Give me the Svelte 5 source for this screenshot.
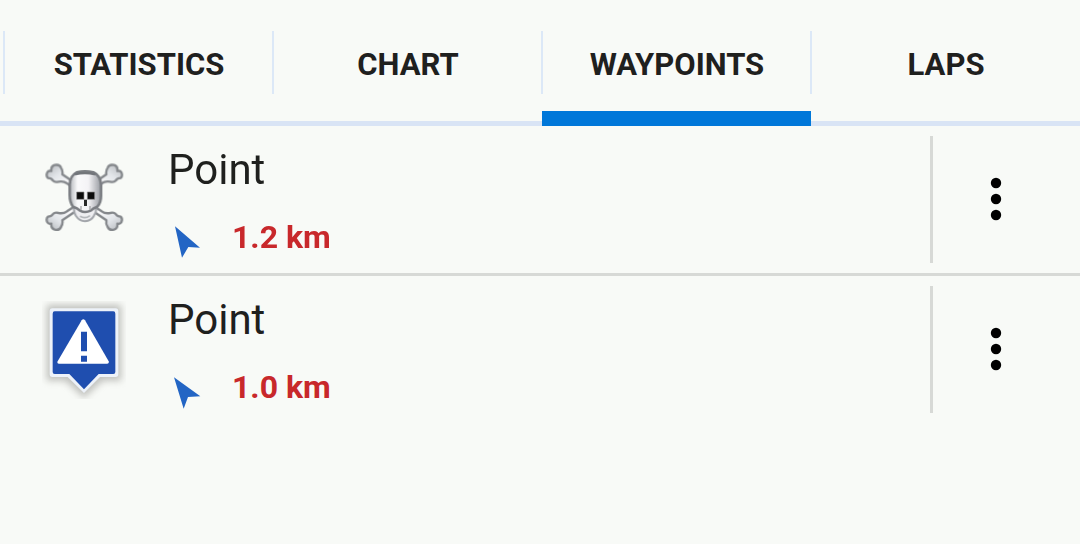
<script>
  const tabs = ['Statistics', 'Chart', 'Waypoints', 'Laps'];
  let active = $state('Waypoints');

  const waypoints = [
    { id: 1, icon: 'skull', name: 'Point', distance: '1.2 km', box: '18 33 126 126', arrow: '45,49 120,113 85,111 66,143' },
    { id: 2, icon: 'warning', name: 'Point', distance: '1.0 km', box: '18 18 126 126', arrow: '42,37 121,94 84,96 71,131' }
  ];
</script>

{#snippet bone()}
  <path d="M148 132 L99 100 Q88 92 74 95 Q62 98 57 92 Q52 84 42 84 Q35 77 40 67 Q43 61 52 63 Q50 48 62 45 Q77 42 81 53 Q87 62 85 73 L160 124 Z"
    fill="url(#bone)" stroke="#85888c" stroke-width="7" stroke-linejoin="round" />
{/snippet}

<main>
  <nav>
    {#each tabs as tab}
      <button class="tab" class:active={tab === active} onclick={() => (active = tab)}>
        <span>{tab}</span>
      </button>
    {/each}
  </nav>

  <ul>
    {#each waypoints as w (w.id)}
      <li>
        {#if w.icon === 'skull'}
          <svg class="marker" viewBox="24 3 252 294" aria-hidden="true">
            <defs>
              <linearGradient id="bone" x1="0" y1="0" x2="1" y2="1">
                <stop offset="0" stop-color="#b3b6ba" />
                <stop offset="0.3" stop-color="#e2e5e9" />
                <stop offset="0.6" stop-color="#fbfbfc" />
                <stop offset="1" stop-color="#d5d7da" />
              </linearGradient>
              <linearGradient id="skull" x1="0" y1="0" x2="1" y2="0">
                <stop offset="0" stop-color="#b4b7bc" />
                <stop offset="0.25" stop-color="#fafafb" />
                <stop offset="0.6" stop-color="#f4f3f6" />
                <stop offset="1" stop-color="#989ba1" />
              </linearGradient>
              <filter id="smooth">
                <feGaussianBlur stdDeviation="2" />
              </filter>
            </defs>
            <g filter="url(#smooth)">
              {@render bone()}
              <g transform="translate(302 0) scale(-1 1)">{@render bone()}</g>
              <g transform="translate(0 284) scale(1 -1)">{@render bone()}</g>
              <g transform="translate(302 284) scale(-1 -1)">{@render bone()}</g>
              <path d="M119 170 Q120 190 126 198 Q136 213 153 214 Q172 212 180 197 Q187 187 187 170 Z" fill="#eeeef1" stroke="#a3a6ab" stroke-width="6" />
              <path d="M128 67 Q153 61 178 67 Q200 77 201 105 V137 Q201 158 190 170 Q178 174 170 182 Q153 190 138 182 Q130 174 117 170 Q107 156 107 135 V104 Q108 77 128 67 Z"
                fill="url(#skull)" stroke="#7b7e83" stroke-width="8" />
              <path d="M122 73 Q153 65 184 73" fill="none" stroke="#72757a" stroke-width="7" />
              <path d="M138 199 Q153 208 168 197" fill="none" stroke="#b3b6ba" stroke-width="5" />
            </g>
            <path d="M128 126 h22 v22 h-22 z M160 126 h22 v22 h-22 z" fill="#0c0c0c" stroke="#8b8b8d" stroke-width="2" />
            <path d="M150 149 h9 v19 h-9 z" fill="#292929" />
            <path d="M141 168 v11 M168 168 v11" stroke="#a6a6a9" stroke-width="4" />
          </svg>
        {:else}
          <svg class="marker" viewBox="24 33 252 294" aria-hidden="true">
            <defs>
              <filter id="soft" x="-20%" y="-20%" width="140%" height="140%">
                <feGaussianBlur stdDeviation="11" />
              </filter>
            </defs>
            <path d="M38 44 H262 V272 H206 L150 324 L94 272 H38 Z" fill="#8b8b86" opacity="0.5" filter="url(#soft)" />
            <path d="M55 55 H245 Q253 55 253 64 V252 Q253 261 245 261 H198 L150 309 L101 261 H55 Q47 261 47 252 V64 Q47 55 55 55 Z" fill="#edf2f9" />
            <path d="M62 64 H238 Q244 64 244 71 V246 Q244 252 238 252 H194 L150 298 L106 252 H62 Q56 252 56 246 V71 Q56 64 62 64 Z" fill="#1f4eaf" />
            <path d="M143 91 Q148 84 153 91 L224 214 Q226 221 219 221 H75 Q68 221 71 214 Z" fill="#fff" />
            <path d="M141 125 h18 v59 h-18 z M141 197 h18 v18 h-18 z" fill="#1f4eaf" />
          </svg>
        {/if}

        <div class="info">
          <h2>{w.name}</h2>
          <p>
            <svg class="arrow" viewBox={w.box} aria-hidden="true">
              <polygon points={w.arrow} fill="#2365c4" />
            </svg>
            {w.distance}
          </p>
        </div>

        <div class="actions">
          <button class="more" aria-label="More options">
            <svg viewBox="0 0 12 44" aria-hidden="true">
              <circle cx="6" cy="6" r="5.2" />
              <circle cx="6" cy="22" r="5.2" />
              <circle cx="6" cy="38" r="5.2" />
            </svg>
          </button>
        </div>
      </li>
    {/each}
  </ul>
</main>

<style>
  :global(body) {
    margin: 0;
    background: #f8faf7;
  }

  main {
    font-family: Roboto, sans-serif;
    color: #1f201e;
  }

  button {
    border: 0;
    padding: 0;
    background: none;
    color: inherit;
    font: inherit;
    cursor: pointer;
  }

  nav {
    display: grid;
    grid-template-columns: repeat(4, 1fr);
    padding-left: 4px;
    background: linear-gradient(#d9e4f5, #d9e4f5) bottom / 100% 5px no-repeat;
  }

  .tab {
    padding: 31px 0 17px;
    border-bottom: 15px solid transparent;
    font-size: 31px;
    font-weight: 700;
    text-transform: uppercase;
  }

  .tab span {
    display: block;
    margin-left: -1px;
    border-left: 2px solid #dce8f7;
    height: 63px;
    line-height: 68px;
  }

  .tab.active {
    border-bottom-color: #0077d9;
  }

  ul {
    margin: 0;
    padding: 0;
    list-style: none;
  }

  li {
    display: flex;
    align-items: center;
    padding: 10px 21px 10px 42px;
  }

  li + li {
    border-top: 3px solid #d7d9d6;
  }

  .marker {
    width: 84px;
    height: 98px;
  }

  .info {
    flex: 1;
    padding-left: 40px;
  }

  h2 {
    margin: 0 0 18px;
    padding: 10px 0 0 2px;
    font-size: 42px;
    font-weight: 400;
    line-height: 48px;
  }

  p {
    display: flex;
    align-items: center;
    gap: 24px;
    margin: 0;
    color: #c8282b;
    font-size: 32px;
    font-weight: 700;
    line-height: 51px;
  }

  .arrow {
    width: 42px;
    height: 42px;
    padding-top: 8px;
  }

  .actions {
    align-self: stretch;
    display: flex;
    border-left: 3px solid #d7d9d6;
  }

  .more {
    width: 126px;
    display: grid;
    place-items: center;
    padding-bottom: 2px;
  }

  .more svg {
    width: 12px;
    height: 44px;
    fill: #000;
  }
</style>
